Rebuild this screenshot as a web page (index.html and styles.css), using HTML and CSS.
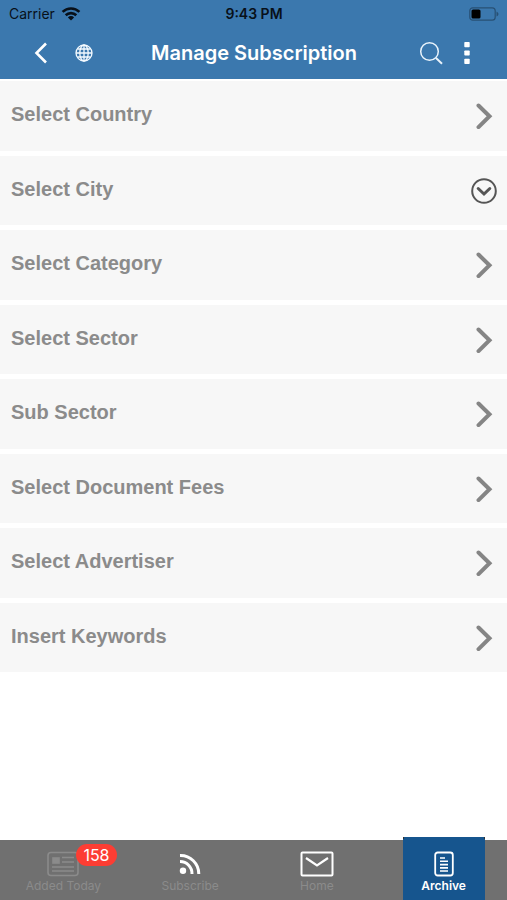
FILE: index.html
```html
<!DOCTYPE html>
<html lang="en">
<head>
<meta charset="utf-8">
<meta name="viewport" content="width=device-width, initial-scale=1">
<title>Manage Subscription</title>
<link rel="stylesheet" href="styles.css">
</head>
<body>
<header class="header">
  <div class="status">
    <div class="carrier">
      <span>Carrier</span>
      <svg width="20" height="14" viewBox="0 0 20 14" aria-hidden="true"><g fill="none" stroke="#081019" stroke-width="2.6"><path d="M1.6 4.9a12 12 0 0 1 16.8 0"/><path d="M4.7 8.3a7.6 7.6 0 0 1 10.6 0"/></g><path d="M10 13.4 6.9 10.4a4.4 4.4 0 0 1 6.2 0z" fill="#081019"/></svg>
    </div>
    <time class="clock">9:43 PM</time>
    <svg class="battery" width="30" height="14" viewBox="0 0 30 14" aria-hidden="true"><rect x=".8" y=".8" width="25.4" height="12.4" rx="3" fill="none" stroke="#285074" stroke-width="1.2"/><rect x="2.5" y="2.5" width="9" height="9" rx="1.6" fill="#000"/><path d="M27.5 4.5q2 1 2 2.5t-2 2.5z" fill="#285074"/></svg>
  </div>
  <nav class="nav">
    <div class="nav-group">
      <button class="icon-button" aria-label="Back"><svg width="14" height="22" viewBox="0 0 14 22"><path d="M12 1.5 2.5 11 12 20.5" fill="none" stroke="#fff" stroke-width="2.6"/></svg></button>
      <button class="icon-button" aria-label="Language"><svg width="18" height="18" viewBox="0 0 18 18" fill="none" stroke="#f4faff" stroke-width="1.3"><circle cx="9" cy="9" r="8"/><ellipse cx="9" cy="9" rx="4.2" ry="8"/><path d="M9 1v16M1 9h16M2.4 5h13.2M2.4 13h13.2"/></svg></button>
    </div>
    <h1 class="title">Manage Subscription</h1>
    <div class="nav-group nav-group-end">
      <button class="icon-button" aria-label="Search"><svg width="24" height="24" viewBox="0 0 24 24" fill="none" stroke="#e9f3fb" stroke-width="1.5"><circle cx="10.5" cy="10.5" r="8.8"/><path d="m17 17 6 5.800" stroke-width="1.900"/></svg></button>
      <button class="icon-button" aria-label="More"><svg width="6" height="22" viewBox="0 0 6 22" fill="#fff"><rect x=".3" width="5.400" height="5.200" rx=".8"/><rect x=".3" y="8.400" width="5.400" height="5.200" rx=".8"/><rect x=".3" y="16.800" width="5.400" height="5.200" rx=".8"/></svg></button>
    </div>
  </nav>
</header>
<main class="main">
  <ul class="filters">
    <li><button class="filter"><span>Select Country</span><svg class="mark" viewBox="0 0 26 26"><path d="m7.500 2.500 11 10.800-11 10.800"/></svg></button></li>
    <li><button class="filter"><span>Select City</span><svg class="mark mark-open" viewBox="0 0 26 26"><circle cx="13" cy="13" r="11.800"/><path class="bold" d="m7.200 10.500 5.800 5.500 5.800-5.500"/></svg></button></li>
    <li><button class="filter"><span>Select Category</span><svg class="mark" viewBox="0 0 26 26"><path d="m7.500 2.500 11 10.800-11 10.800"/></svg></button></li>
    <li><button class="filter"><span>Select Sector</span><svg class="mark" viewBox="0 0 26 26"><path d="m7.500 2.500 11 10.800-11 10.800"/></svg></button></li>
    <li><button class="filter"><span>Sub Sector</span><svg class="mark" viewBox="0 0 26 26"><path d="m7.500 2.500 11 10.800-11 10.800"/></svg></button></li>
    <li><button class="filter"><span>Select Document Fees</span><svg class="mark" viewBox="0 0 26 26"><path d="m7.500 2.500 11 10.800-11 10.800"/></svg></button></li>
    <li><button class="filter"><span>Select Advertiser</span><svg class="mark" viewBox="0 0 26 26"><path d="m7.500 2.500 11 10.800-11 10.800"/></svg></button></li>
    <li><button class="filter"><span>Insert Keywords</span><svg class="mark" viewBox="0 0 26 26"><path d="m7.500 2.500 11 10.800-11 10.800"/></svg></button></li>
  </ul>
</main>
<footer class="tabs">
  <a class="tab" href="#added">
    <span class="tab-icon">
      <svg width="32" height="26" viewBox="0 0 32 26" fill="none" stroke="#8b8b8b" stroke-width="1.600"><rect x="1" y="1.500" width="30" height="23" rx="3"/><rect x="6" y="7" width="6" height="5" fill="#8b8b8b"/><path d="M15 6.500h12M15 11h12M5 16h22M5 20h22"/></svg>
      <span class="badge">158</span>
    </span>
    <span>Added Today</span>
  </a>
  <a class="tab" href="#subscribe">
    <span class="tab-icon"><svg width="22" height="22" viewBox="0 0 22 22" fill="none" stroke="#fff" stroke-width="3"><circle cx="4" cy="17.800" r="3.200" fill="#fff" stroke="none"/><path d="M1 8.500a12 12 0 0 1 12 12.500M1 2.500a18.300 18.300 0 0 1 18.800 18.500"/></svg></span>
    <span>Subscribe</span>
  </a>
  <a class="tab" href="#home">
    <span class="tab-icon"><svg width="34" height="26" viewBox="0 0 34 26" fill="none" stroke="#fff" stroke-width="2"><rect x="1.500" y="1.500" width="31" height="23" rx="1"/><path d="m6 7 11 7.500L28 7" stroke-width="2.200"/></svg></span>
    <span>Home</span>
  </a>
  <a class="tab tab-active" href="#archive" aria-current="page">
    <span class="tab-icon"><svg width="20" height="26" viewBox="0 0 20 26" fill="none" stroke="#fff" stroke-width="1.800"><rect x="1.200" y="1.500" width="17.600" height="23" rx="2.500"/><path d="M6 7h5M6 10.300h8M6 13.600h8M6 16.900h8M6 20h8" stroke-width="1.600"/></svg></span>
    <span>Archive</span>
  </a>
</footer>
</body>
</html>
```
FILE: styles.css
```css
* { box-sizing: border-box; }

body {
  margin: 0;
  min-height: 100vh;
  display: flex;
  flex-direction: column;
  background: #fff;
  font-family: Inter, "Liberation Sans", sans-serif;
}

button {
  border: 0;
  padding: 0;
  background: none;
  font: inherit;
  color: inherit;
  cursor: pointer;
}

svg { display: block; flex: none; }

.header { background: #3b78ae; }

.status {
  display: grid;
  grid-template-columns: 1fr auto 1fr;
  align-items: center;
  height: 27px;
  padding: 0 8px 0 9px;
  font-size: 14px;
  color: #081019;
}

.carrier { display: flex; align-items: center; gap: 6px; }
.clock { font-weight: 600; }
.battery { justify-self: end; }

.nav {
  display: grid;
  grid-template-columns: 1fr auto 1fr;
  align-items: center;
  height: 52px;
  padding: 0 37px 0 34px;
}

.nav-group { display: flex; align-items: center; gap: 27px; }
.nav-group-end { justify-content: flex-end; gap: 21px; }

.title {
  margin: 0;
  padding-left: 4px;
  font-size: 20px;
  font-weight: 600;
  color: #fff;
}

.main { flex: 1; }

.filters {
  display: flex;
  flex-direction: column;
  gap: 5px;
  margin: 0;
  padding: 2px 0 0;
  list-style: none;
}

.filter {
  display: flex;
  align-items: center;
  justify-content: space-between;
  width: 100%;
  height: 70px;
  padding: 0 10px 0 11px;
  background: #f7f7f7;
  font: bold 20px "Liberation Sans", sans-serif;
  color: #8b8b8b;
}

li:nth-child(even) .filter { height: 69px; }
.filter span { padding-bottom: 3px; }

.mark {
  width: 26px;
  height: 26px;
  fill: none;
  stroke: #858585;
  stroke-width: 4;
  stroke-linecap: round;
}

.mark-open { stroke: #555; stroke-width: 2; }
.bold { stroke-width: 3; }

.tabs {
  display: grid;
  grid-template-columns: repeat(4, 1fr);
  grid-template-rows: 60px;
  align-items: end;
  background: #707070;
  font-size: 12px;
  line-height: 16px;
}

.tab {
  display: flex;
  flex-direction: column;
  align-items: center;
  justify-content: flex-end;
  gap: 1px;
  height: 60px;
  padding-bottom: 6px;
  color: #8b8b8b;
  text-decoration: none;
}

.tab-icon {
  position: relative;
  display: flex;
  align-items: center;
  height: 26px;
}

.badge {
  position: absolute;
  left: 29px;
  top: -7px;
  padding: 0 7px;
  border-radius: 11px;
  background: #fc3d33;
  color: #fff;
  font-size: 16px;
  line-height: 22px;
}

.tab-active {
  justify-self: center;
  width: 82px;
  height: 63px;
  border: solid #333;
  border-width: 0 1px;
  border-image: linear-gradient(#333 3px, #16558e 3px) 1;
  background: #16558e;
  color: #fff;
  font-weight: 600;
}
```
